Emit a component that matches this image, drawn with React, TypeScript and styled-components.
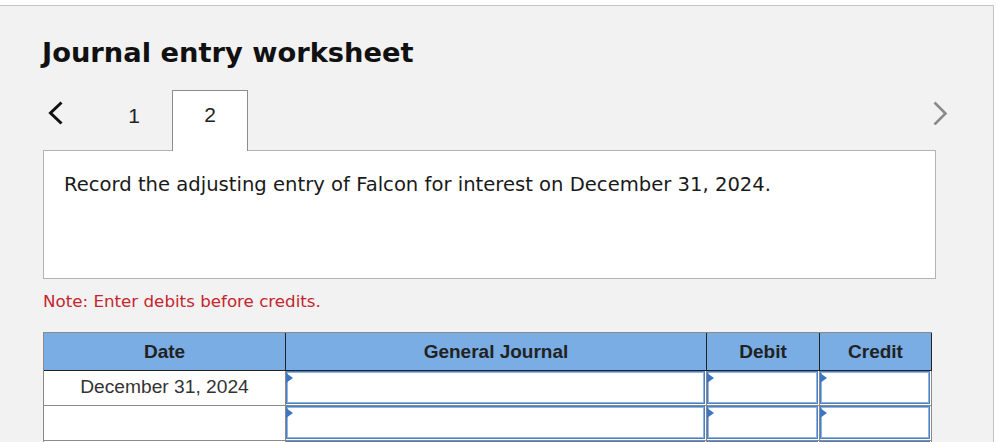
import React from "react";
import styled, { createGlobalStyle } from "styled-components";

const GlobalStyle = createGlobalStyle`
  html, body { margin: 0; padding: 0; background: #ffffff; }
  body { overflow: hidden; }
  * { box-sizing: border-box; }
`;

const Page = styled.div`
  padding-top: 5px;
  background: #ffffff;
`;

const Panel = styled.div`
  width: 994px;
  min-height: 480px;
  background: #f2f2f2;
  border-top: 1px solid #c4c4c4;
  border-right: 1px solid #c4c4c4;
  padding-left: 42px;
`;

const Title = styled.h1`
  margin: 31px 0 0 0;
  font-family: "DejaVu Sans", Verdana, sans-serif;
  font-weight: bold;
  font-size: 27.3px;
  line-height: 32px;
  color: #111;
`;

const TabsRow = styled.div`
  display: flex;
  align-items: flex-start;
  width: 905px;
  margin-top: 21px;
  margin-left: 1px;
`;

const NavButton = styled.div<{ $right?: boolean }>`
  width: 53px;
  height: 60px;
  display: flex;
  align-items: flex-start;
  padding-top: 11px;
  padding-left: ${(p) => (p.$right ? "0" : "5px")};
  justify-content: ${(p) => (p.$right ? "flex-end" : "flex-start")};
  margin-left: ${(p) => (p.$right ? "auto" : "0")};
`;

const Tab = styled.div<{ $active?: boolean }>`
  position: relative;
  z-index: 1;
  width: 76px;
  height: 61px;
  margin-bottom: -1px;
  padding-top: ${(p) => (p.$active ? "12px" : "13px")};
  text-align: center;
  font-family: "Liberation Sans", Arial, sans-serif;
  font-size: 21px;
  line-height: 24px;
  color: #222;
  background: ${(p) => (p.$active ? "#ffffff" : "transparent")};
  border: 1px solid ${(p) => (p.$active ? "#8c8c8c" : "transparent")};
  border-bottom: none;
`;

const QuestionBox = styled.div`
  width: 893px;
  height: 129px;
  margin-left: 1px;
  background: #ffffff;
  border: 1px solid #b3b3b3;
  padding: 22px 20px 0 20px;
  font-family: "DejaVu Sans", Verdana, sans-serif;
  font-size: 19.6px;
  line-height: 24px;
  color: #1a1a1a;
`;

const Note = styled.p`
  margin: 12px 0 0 1px;
  font-family: "DejaVu Sans", Verdana, sans-serif;
  font-size: 16.7px;
  line-height: 20px;
  color: #c4262e;
`;

const Table = styled.div`
  width: 889px;
  margin-top: 21px;
  margin-left: 1px;
  border-top: 1px solid #8a8a8a;
  border-left: 1px solid #8a8a8a;
`;

const Row = styled.div<{ $header?: boolean }>`
  display: grid;
  grid-template-columns: 241px 420px 112px 111px;
  column-gap: 1px;
  padding: 0 1px 1px 0;
  background: ${(p) => (p.$header ? "#222222" : "#8a8a8a")};
`;

const HeadCell = styled.div`
  height: 37px;
  background: #79ade3;
  text-align: center;
  font-family: "Liberation Sans", Arial, sans-serif;
  font-weight: bold;
  font-size: 19px;
  line-height: 37px;
  color: #222;
`;

const DateCell = styled.div`
  height: 34px;
  background: #ffffff;
  text-align: center;
  font-family: "Liberation Sans", Arial, sans-serif;
  font-size: 19.2px;
  line-height: 32px;
  color: #333;
`;

const InputCell = styled.div`
  height: 34px;
  background: #ffffff;
  padding: 0 1px 1px 0;
`;

const InputBox = styled.div`
  position: relative;
  width: 100%;
  height: 100%;
  background: #ffffff;
  border: 1px solid #4c7fc1;
  box-shadow: inset 0 0 0 1px #8fb3e3;
`;

const Marker = styled.span`
  position: absolute;
  left: -1px;
  top: 1px;
  width: 0;
  height: 0;
  border-top: 5px solid transparent;
  border-bottom: 5px solid transparent;
  border-left: 7px solid #3b76c4;
`;

const Chevron: React.FC<{ dir: "left" | "right" }> = ({ dir }) => (
  <svg width="16" height="24" viewBox="0 0 16 24" aria-hidden="true">
    {dir === "left" ? (
      <polyline
        points="13.5,1.5 2.5,12 13.5,22.5"
        fill="none"
        stroke="#111"
        strokeWidth="3"
        strokeLinejoin="miter"
      />
    ) : (
      <polyline
        points="2.5,1.5 13.5,12.5 2.5,23.5"
        fill="none"
        stroke="#8a8a8a"
        strokeWidth="2.6"
      />
    )}
  </svg>
);

const Entry: React.FC<{ date?: string }> = ({ date }) => (
  <Row>
    <DateCell>{date ?? ""}</DateCell>
    {[0, 1, 2].map((i) => (
      <InputCell key={i}>
        <InputBox>
          <Marker />
        </InputBox>
      </InputCell>
    ))}
  </Row>
);

export default function App() {
  return (
    <>
      <GlobalStyle />
      <Page>
        <Panel>
          <Title>Journal entry worksheet</Title>
          <TabsRow>
            <NavButton>
              <Chevron dir="left" />
            </NavButton>
            <Tab>1</Tab>
            <Tab $active>2</Tab>
            <NavButton $right>
              <Chevron dir="right" />
            </NavButton>
          </TabsRow>
          <QuestionBox>
            Record the adjusting entry of Falcon for interest on December 31, 2024.
          </QuestionBox>
          <Note>Note: Enter debits before credits.</Note>
          <Table>
            <Row $header>
              <HeadCell>Date</HeadCell>
              <HeadCell>General Journal</HeadCell>
              <HeadCell>Debit</HeadCell>
              <HeadCell>Credit</HeadCell>
            </Row>
            <Entry date="December 31, 2024" />
            <Entry />
            <Entry />
          </Table>
        </Panel>
      </Page>
    </>
  );
}
